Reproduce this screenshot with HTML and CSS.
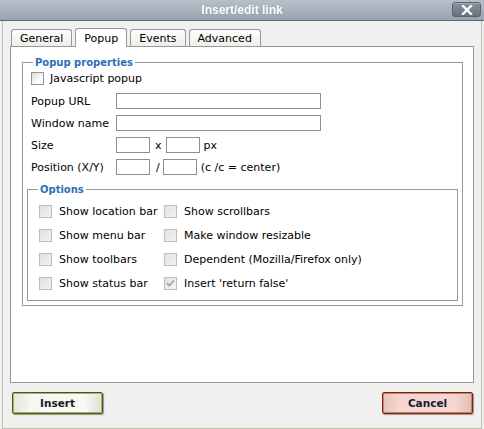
FILE: index.html
```html
<!DOCTYPE html>
<html>
<head>
<meta charset="utf-8">
<title>Insert/edit link</title>
<link rel="stylesheet" href="styles.css">
</head>
<body>
<div class="window">
  <div class="titlebar">
    <span></span>
    <span class="title">Insert/edit link</span>
    <span class="close">
      <svg width="12" height="10" viewBox="0 0 12 10"><path d="M2 1 L10 9 M10 1 L2 9" stroke="#fff" stroke-width="2.4" stroke-linecap="square"/></svg>
    </span>
  </div>
  <div class="frame">
    <div class="tabs">
      <span class="tab">General</span>
      <span class="tab current">Popup</span>
      <span class="tab">Events</span>
      <span class="tab">Advanced</span>
    </div>
    <div class="panel">
      <fieldset class="group">
        <legend>Popup properties</legend>
        <div class="props">
          <div class="check-row"><span class="cb"></span><span>Javascript popup</span></div>
          <div class="fields">
            <div class="field"><span class="lbl">Popup URL</span><span class="input wide"></span></div>
            <div class="field"><span class="lbl">Window name</span><span class="input wide"></span></div>
            <div class="field"><span class="lbl">Size</span><span class="input small"></span><span class="times">x</span><span class="input small"></span><span class="unit">px</span></div>
            <div class="field"><span class="lbl">Position (X/Y)</span><span class="input small"></span><span class="slash">/</span><span class="input small"></span><span class="unit">(c /c = center)</span></div>
          </div>
        </div>
        <fieldset class="group options">
          <legend>Options</legend>
          <div class="opts">
            <div class="opt"><span class="cb off"></span><span>Show location bar</span></div>
            <div class="opt"><span class="cb off"></span><span>Show scrollbars</span></div>
            <div class="opt"><span class="cb off"></span><span>Show menu bar</span></div>
            <div class="opt"><span class="cb off"></span><span>Make window resizable</span></div>
            <div class="opt"><span class="cb off"></span><span>Show toolbars</span></div>
            <div class="opt"><span class="cb off"></span><span>Dependent (Mozilla/Firefox only)</span></div>
            <div class="opt"><span class="cb off"></span><span>Show status bar</span></div>
            <div class="opt"><span class="cb off"><svg width="11" height="11" viewBox="0 0 11 11"><path d="M2 5 L4.3 7.5 L9 2.5" fill="none" stroke="#a3a3a3" stroke-width="1.8"/></svg></span><span>Insert 'return false'</span></div>
          </div>
        </fieldset>
      </fieldset>
    </div>
    <div class="buttons">
      <span class="btn insert">Insert</span>
      <span class="btn cancel">Cancel</span>
    </div>
  </div>
</div>
</body>
</html>
```
FILE: styles.css
```css
* { box-sizing: border-box; }
html, body { margin: 0; padding: 0; }
body {
  width: 484px;
  height: 429px;
  overflow: hidden;
  background: #f0f0ee;
  font-family: "DejaVu Sans", Verdana, sans-serif;
  font-size: 11px;
  color: #000;
}
.window { display: flex; flex-direction: column; height: 429px; }

.titlebar {
  height: 21px;
  border-bottom: 1px solid #5e6873;
  background: linear-gradient(#b7c0c9, #96a2ae);
  display: grid;
  grid-template-columns: 1fr auto 1fr;
  align-items: center;
}
.title {
  font-family: "Liberation Sans", Arial, sans-serif;
  font-weight: bold;
  font-size: 12px;
  color: #fff;
  text-shadow: 0 0 1px #7d8996;
}
.close {
  justify-self: end;
  align-self: start;
  margin: 2px 3px 0 0;
  width: 29px;
  height: 15px;
  border: 1px solid #59636d;
  border-radius: 3px;
  background: linear-gradient(#8993a0, #66717d);
  box-shadow: inset 0 1px 0 #a4aeb9;
  display: flex;
  align-items: center;
  justify-content: center;
}
.close svg { display: block; }

.frame {
  flex: 1;
  margin: 0 2px;
  border: 1px solid #c3bcb3;
  border-top: none;
  display: flex;
  flex-direction: column;
}
.tabs {
  height: 25px;
  display: flex;
  align-items: flex-end;
  gap: 3px;
  padding-left: 8px;
}
.tab {
  height: 17px;
  padding: 0 8px;
  border: 1px solid #919b9c;
  border-bottom: none;
  border-radius: 3px 3px 0 0;
  background: linear-gradient(#fdfdfd, #efeee9);
  display: flex;
  align-items: center;
  line-height: 1;
}
.tab.current {
  height: 19px;
  margin-bottom: -1px;
  background: #fff;
  position: relative;
  z-index: 1;
}
.panel {
  height: 337px;
  margin: 0 7px;
  border: 1px solid #919b9c;
  background: #fff;
  padding: 9px 10px 0 11px;
}
fieldset.group {
  margin: 0;
  min-width: 0;
  border: 1px solid #919b9c;
  padding: 0 4px 4px;
}
legend {
  color: #2b6fb6;
  font-weight: bold;
  font-size: 10px;
  line-height: 13px;
  padding: 0 2px;
  margin-left: 6px;
}
.props { padding-left: 4px; }
.check-row {
  height: 18px;
  display: flex;
  align-items: center;
  gap: 6px;
}
.fields { margin-top: 3px; }
.field {
  height: 22px;
  display: flex;
  align-items: center;
}
.lbl { width: 85px; }
.input {
  height: 16px;
  border: 1px solid #8f8f8f;
  background: #fff;
}
.input.wide { width: 205px; }
.input.small { width: 34px; }
.times { margin: 0 4px 0 5px; }
.slash { margin: 0 3px 0 6px; }
.unit { margin-left: 4px; }

.cb {
  width: 13px;
  height: 13px;
  border: 1px solid #959595;
  background: linear-gradient(135deg, #d9d9d3, #ffffff 70%);
  display: flex;
  align-items: center;
  justify-content: center;
}
.cb.off {
  border-color: #bdbdb9;
  background: linear-gradient(135deg, #e1e1dd, #f3f3f1);
}
.cb svg { display: block; }

fieldset.options {
  margin-top: 5px;
  padding: 3px 4px 5px 11px;
}
fieldset.options legend { margin-left: -1px; }
.opts {
  display: grid;
  grid-template-columns: 125px auto;
  grid-auto-rows: 24px;
}
.opt {
  display: flex;
  align-items: center;
  gap: 7px;
}

.buttons {
  display: flex;
  justify-content: space-between;
  padding: 9px 8px 0 9px;
}
.btn {
  width: 91px;
  height: 22px;
  border-radius: 2px;
  display: flex;
  align-items: center;
  justify-content: center;
  font-weight: bold;
  font-size: 10.5px;
  color: #161a2c;
}
.btn.insert {
  border: 1px solid #4a5420;
  box-shadow: inset 0 0 0 1px #a9b765, 1px 1px 1px #9a9a90;
  background: linear-gradient(90deg, #e4e4dc, #f6f6f2 20%, #f8f8f4 80%, #e0e0d8);
}
.btn.cancel {
  border: 1px solid #7b2313;
  box-shadow: inset 0 0 0 1px #d27c66, 1px 1px 1px #9a9a90;
  background: linear-gradient(90deg, #e8c2b8, #f3d8d2 20%, #f3d8d2 80%, #e4bcb2);
}
```
